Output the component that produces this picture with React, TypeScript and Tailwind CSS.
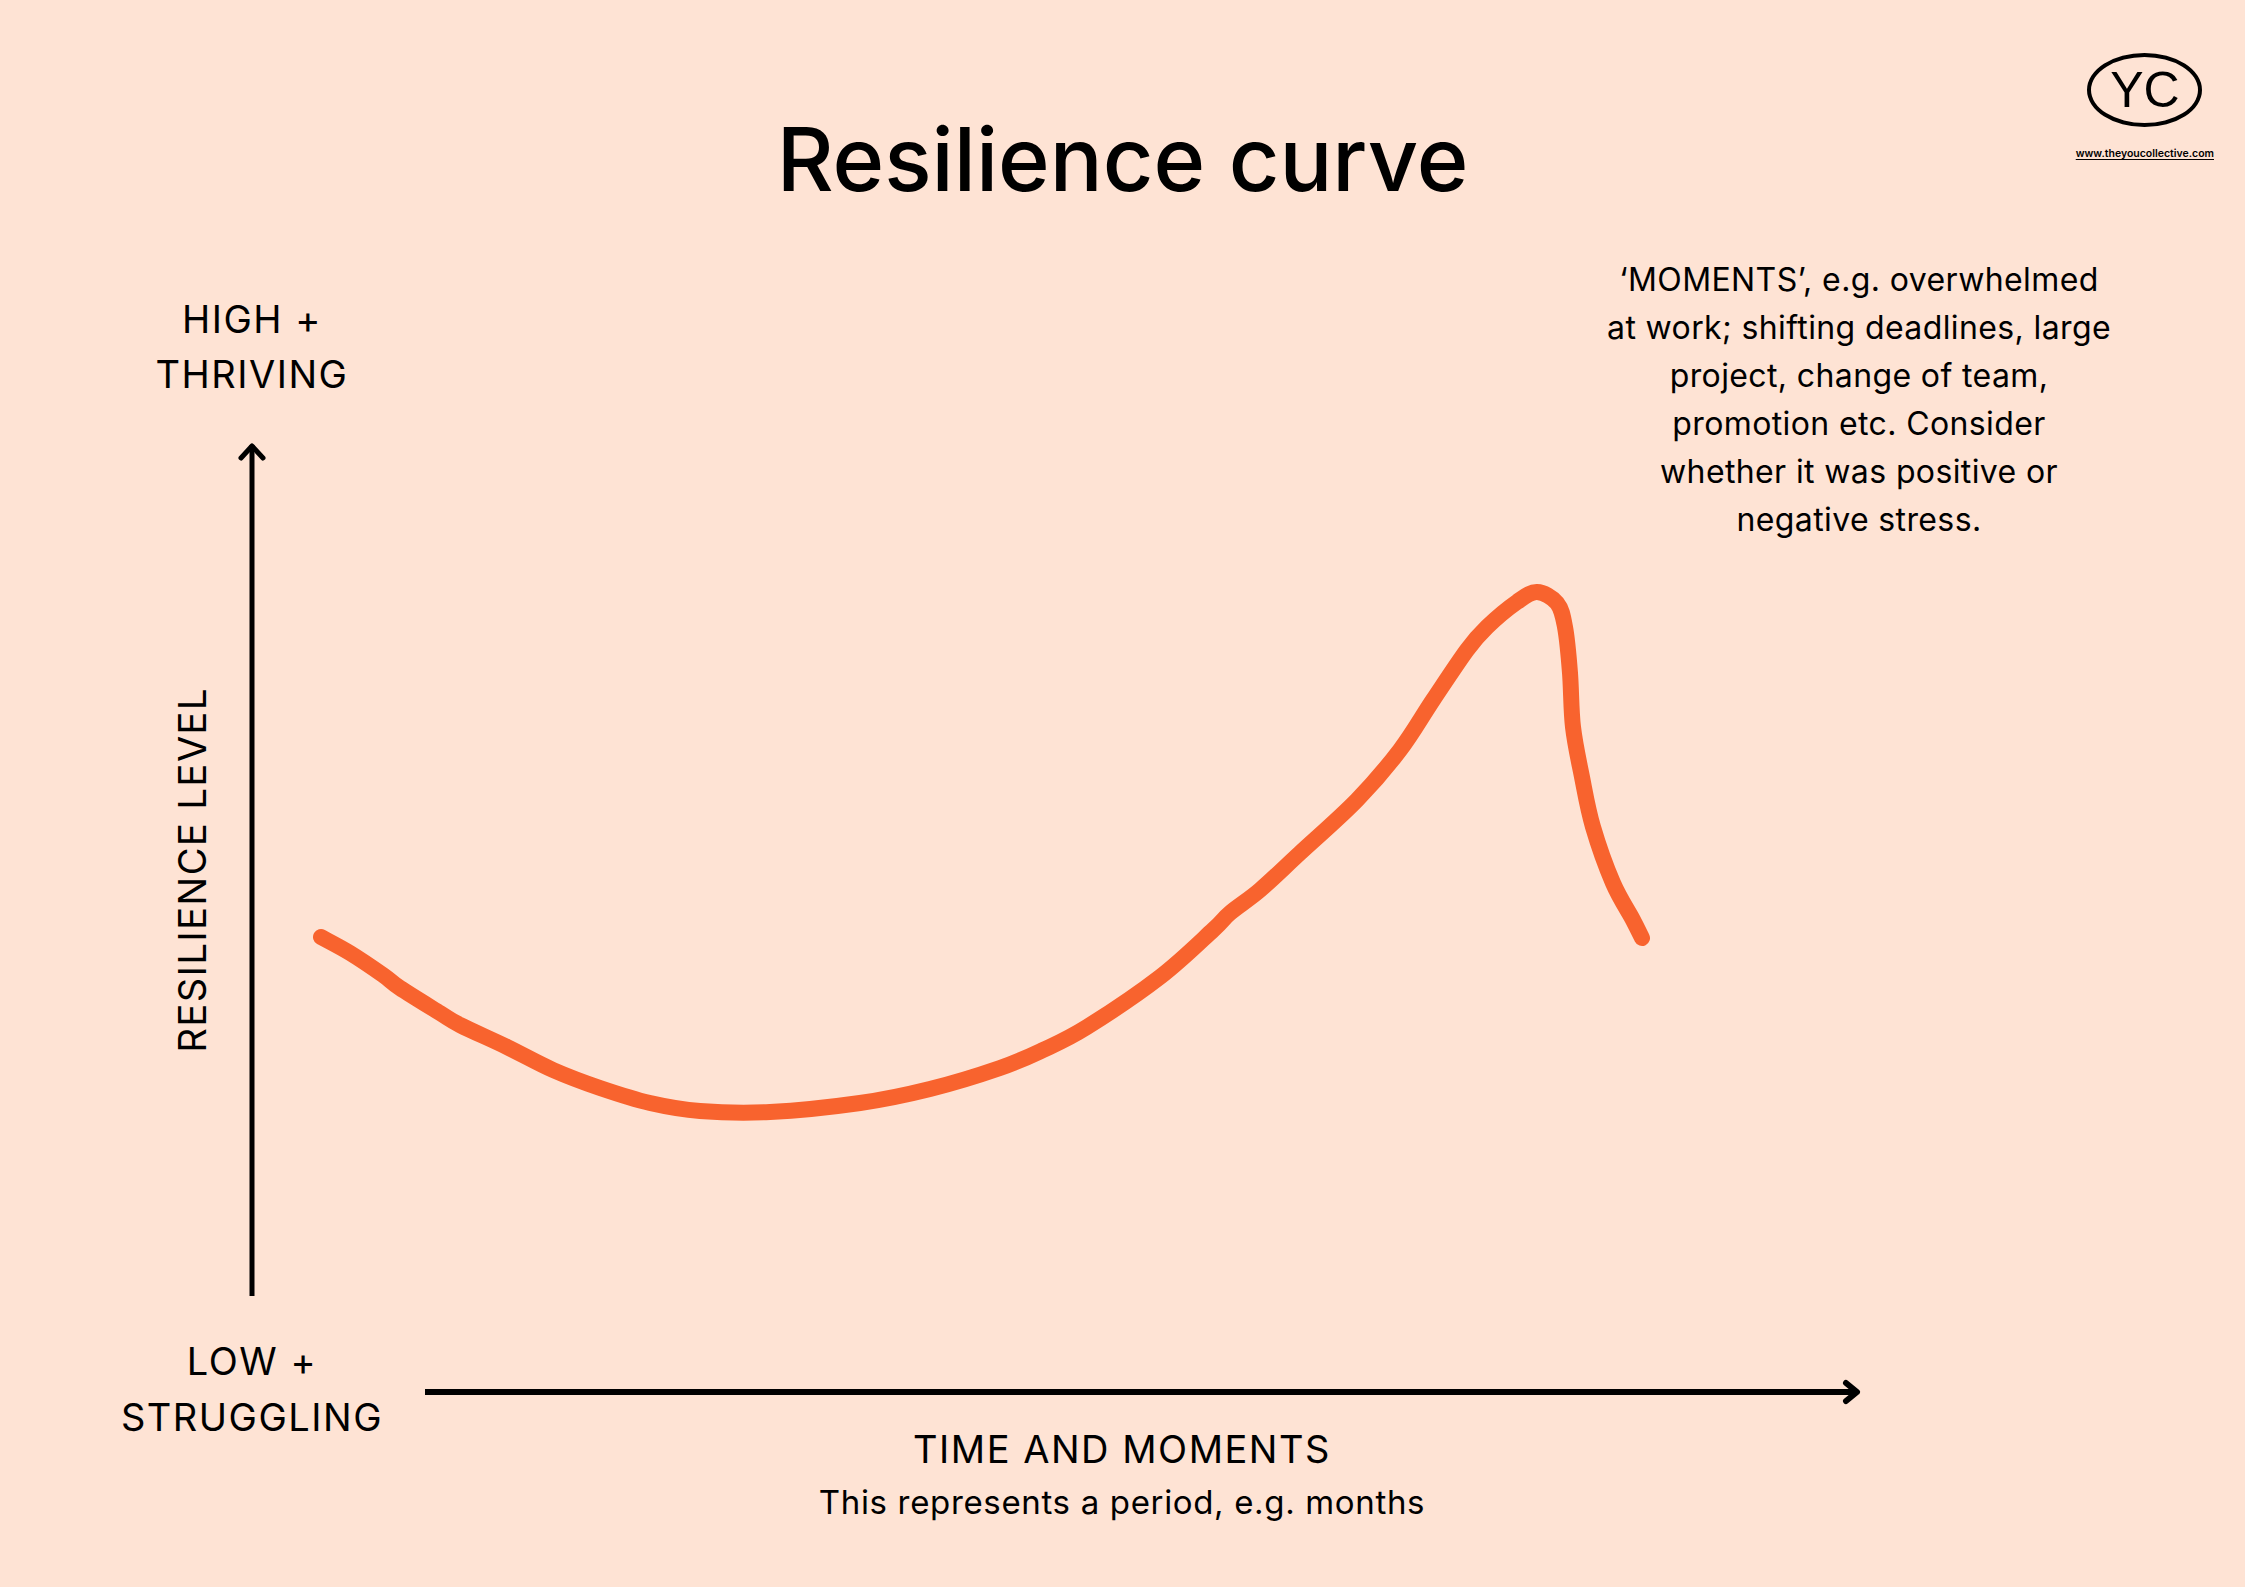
import React from 'react';

type Pt = [number, number];

// Hand-traced centre line of the orange stroke, in page pixels
const curvePoints: Pt[] = [
  [321, 937], [350, 953], [383, 975], [400, 988], [440, 1013], [460, 1025],
  [507, 1047], [553, 1070], [600, 1088], [650, 1103], [700, 1111], [770, 1112],
  [860, 1103], [930, 1089], [1000, 1068], [1043, 1050], [1087, 1027], [1160, 977],
  [1213, 930], [1230, 913], [1260, 890], [1300, 853], [1357, 800], [1400, 750],
  [1433, 700], [1467, 650], [1487, 627], [1517, 602], [1537, 592], [1557, 603],
  [1565, 627], [1570, 673], [1573, 727], [1582, 777], [1593, 827], [1613, 883],
  [1633, 920], [1642, 938],
];

function smoothPath(pts: Pt[]) {
  let d = `M ${pts[0][0]} ${pts[0][1]}`;
  for (let i = 0; i < pts.length - 1; i++) {
    const p0 = pts[i - 1] || pts[i];
    const p1 = pts[i];
    const p2 = pts[i + 1];
    const p3 = pts[i + 2] || p2;
    const c1x = p1[0] + (p2[0] - p0[0]) / 6;
    const c1y = p1[1] + (p2[1] - p0[1]) / 6;
    const c2x = p2[0] - (p3[0] - p1[0]) / 6;
    const c2y = p2[1] - (p3[1] - p1[1]) / 6;
    d += ` C ${c1x.toFixed(1)} ${c1y.toFixed(1)} ${c2x.toFixed(1)} ${c2y.toFixed(1)} ${p2[0]} ${p2[1]}`;
  }
  return d;
}

const noteLines = [
  '\u2018MOMENTS\u2019, e.g. overwhelmed',
  'at work; shifting deadlines, large',
  'project, change of team,',
  'promotion etc. Consider',
  'whether it was positive or',
  'negative stress.',
];

function Logo() {
  return (
    <div className="flex flex-col items-center pt-[53px] pr-[31px]">
      <div className="flex h-[74px] w-[115px] items-center justify-center rounded-[50%] border-4 border-black">
        <span className="font-['Liberation_Sans',sans-serif] text-[50px] leading-none">YC</span>
      </div>
      <span className="mt-[22px] text-[10.5px] font-semibold leading-none underline underline-offset-2">
        www.theyoucollective.com
      </span>
    </div>
  );
}

function VerticalAxis() {
  return (
    <svg width="30" height="860" viewBox="0 0 30 860" className="block">
      <line x1="15" y1="5" x2="15" y2="856" stroke="black" strokeWidth="5" />
      <polyline
        points="4,18 15,6 26,18"
        fill="none"
        stroke="black"
        strokeWidth="5"
        strokeLinecap="round"
        strokeLinejoin="round"
      />
    </svg>
  );
}

// The curve starts left of the chart column, so the canvas reaches 100px back over the axis gutter
function Chart() {
  return (
    <svg width="1941" height="866" viewBox="304 544 1941 866" className="-ml-[100px] block">
      <path
        d={smoothPath(curvePoints)}
        fill="none"
        stroke="#f8632e"
        strokeWidth="16"
        strokeLinecap="round"
        strokeLinejoin="round"
      />
      <line x1="425" y1="1392" x2="1856" y2="1392" stroke="black" strokeWidth="6" />
      <polyline
        points="1846,1383 1857,1392 1846,1401"
        fill="none"
        stroke="black"
        strokeWidth="6"
        strokeLinecap="round"
        strokeLinejoin="round"
      />
    </svg>
  );
}

export default function App() {
  return (
    <div className="flex h-[1587px] w-[2245px] flex-col overflow-hidden bg-[#fee3d4] font-['Inter','Noto_Sans',sans-serif] text-black">
      <header className="grid h-[250px] grid-cols-[1fr_auto_1fr] items-start">
        <div />
        <h1 className="pt-[115px] text-[88px] font-medium leading-none">Resilience curve</h1>
        <div className="justify-self-end">
          <Logo />
        </div>
      </header>

      <div className="flex flex-1">
        <aside className="flex w-[404px] flex-col pl-[100px] pt-[42px] text-center text-[38px] tracking-[0.04em]">
          <p className="leading-[55px]">
            HIGH +<br />
            THRIVING
          </p>
          <div className="mt-[38px] grid grid-cols-[1fr_auto_1fr] items-center">
            <span className="mr-[26px] justify-self-end rotate-180 leading-none [writing-mode:vertical-rl]">
              RESILIENCE LEVEL
            </span>
            <VerticalAxis />
            <div />
          </div>
          <p className="mt-[33px] leading-[56px]">
            LOW +<br />
            STRUGGLING
          </p>
        </aside>

        <main className="flex flex-1 flex-col">
          <div className="ml-auto mr-[96px] w-[580px] pt-[6px] text-center text-[32px] leading-[48px] tracking-[0.012em]">
            {noteLines.map((line) => (
              <div key={line}>{line}</div>
            ))}
          </div>
          <Chart />
          <div className="mt-[20px] w-[1436px] text-center">
            <p className="text-[38px] leading-none tracking-[0.04em]">TIME AND MOMENTS</p>
            <p className="mt-[18px] text-[33px] leading-none tracking-[0.02em]">
              This represents a period, e.g. months
            </p>
          </div>
        </main>
      </div>
    </div>
  );
}
